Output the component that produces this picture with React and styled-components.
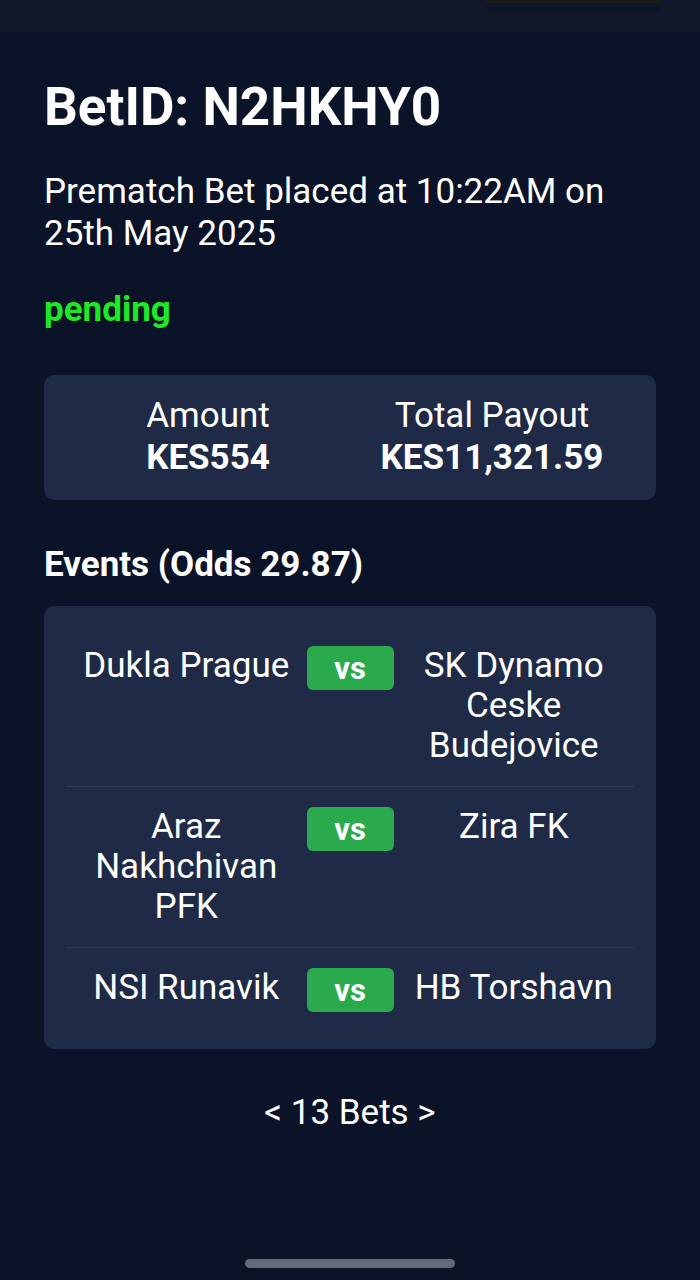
import styled, { createGlobalStyle } from "styled-components";

const events = [
  { home: "Dukla Prague", away: "SK Dynamo Ceske Budejovice" },
  { home: "Araz Nakhchivan PFK", away: "Zira FK" },
  { home: "NSI Runavik", away: "HB Torshavn" },
];

const GlobalStyle = createGlobalStyle`
  body {
    margin: 0;
    background: #0b1329;
    font-family: Roboto, "Liberation Sans", sans-serif;
    color: #ffffff;
  }
`;

const App = () => (
  <Screen>
    <GlobalStyle />
    <StatusBar>
      <Notch />
    </StatusBar>
    <Content>
      <Title>BetID: N2HKHY0</Title>
      <Subtitle>Prematch Bet placed at 10:22AM on 25th May 2025</Subtitle>
      <Status>pending</Status>

      <SummaryCard>
        <SummaryItem>
          <span>Amount</span>
          <strong>KES554</strong>
        </SummaryItem>
        <SummaryItem>
          <span>Total Payout</span>
          <strong>KES11,321.59</strong>
        </SummaryItem>
      </SummaryCard>

      <SectionTitle>Events (Odds 29.87)</SectionTitle>
      <EventsCard>
        {events.map((ev) => (
          <EventRow key={ev.home}>
            <Team>{ev.home}</Team>
            <VsBadge>vs</VsBadge>
            <Team>{ev.away}</Team>
          </EventRow>
        ))}
      </EventsCard>

      <Pager>&lt; 13 Bets &gt;</Pager>
    </Content>
    <HomeIndicator />
  </Screen>
);

export default App;

const Screen = styled.div`
  min-height: 1280px;
  display: flex;
  flex-direction: column;
`;

const StatusBar = styled.div`
  height: 32px;
  background: #121729;
  display: flex;
  justify-content: flex-end;
  padding-right: 40px;
`;

const Notch = styled.div`
  width: 173px;
  height: 11px;
  background: #0f1528;
  border-top: 3px solid #1b1b17;
`;

const Content = styled.div`
  padding: 0 44px;
  display: flex;
  flex-direction: column;
`;

const Title = styled.h1`
  margin: 45px 0 0;
  font-size: 53px;
  line-height: 60px;
  font-weight: 700;
`;

const Subtitle = styled.p`
  margin: 34px 0 0;
  font-size: 35px;
  line-height: 42px;
`;

const Status = styled.div`
  margin-top: 34px;
  font-size: 35px;
  line-height: 42px;
  font-weight: 700;
  color: #1fe826;
`;

const SummaryCard = styled.div`
  margin-top: 44px;
  background: #1f2a47;
  border-radius: 10px;
  padding: 20px 22px 21px;
  display: grid;
  grid-template-columns: 1fr 1fr;
`;

const SummaryItem = styled.div`
  display: flex;
  flex-direction: column;
  align-items: center;
  font-size: 35px;
  line-height: 42px;

  strong {
    font-weight: 700;
  }
`;

const SectionTitle = styled.h2`
  margin: 44px 0 0;
  font-size: 35px;
  line-height: 42px;
  font-weight: 700;
`;

const EventsCard = styled.div`
  margin-top: 20px;
  background: #1f2a47;
  border-radius: 10px;
  padding: 20px 22px 17px;
`;

const EventRow = styled.div`
  display: grid;
  grid-template-columns: 1fr 87px 1fr;
  align-items: start;
  padding: 20px 0;
  border-bottom: 1px solid #2f3954;

  &:last-child {
    border-bottom: none;
  }
`;

const Team = styled.div`
  text-align: center;
  font-size: 35px;
  line-height: 40px;
`;

const VsBadge = styled.div`
  height: 44px;
  border-radius: 6px;
  background: #2ba94d;
  display: flex;
  align-items: center;
  justify-content: center;
  font-size: 31px;
  font-weight: 700;
`;

const Pager = styled.div`
  margin-top: 43px;
  text-align: center;
  font-size: 35px;
  line-height: 42px;
`;

const HomeIndicator = styled.div`
  margin: auto auto 12px;
  width: 210px;
  height: 9px;
  border-radius: 5px;
  background: #646a7a;
`;
